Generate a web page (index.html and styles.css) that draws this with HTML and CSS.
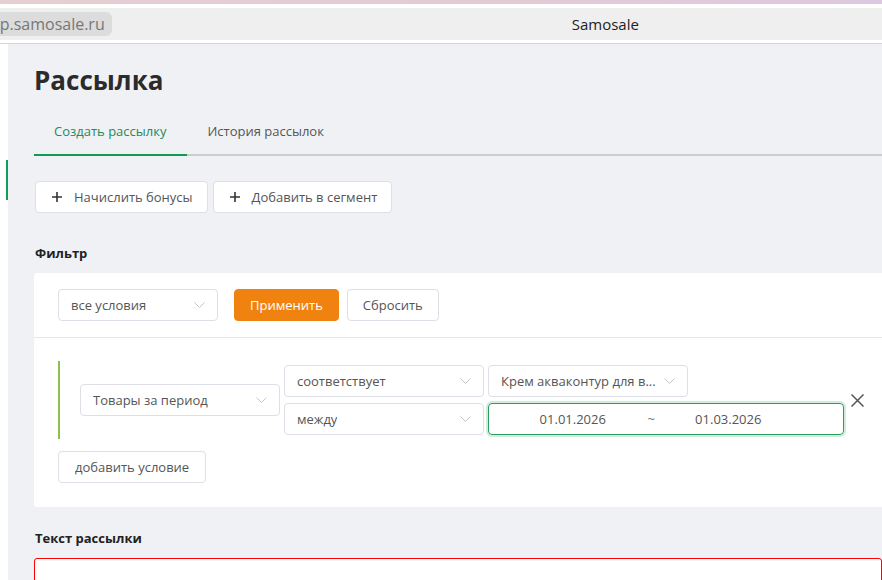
FILE: index.html
```html
<!DOCTYPE html>
<html>
<head>
<title>Samosale</title>
<link rel="stylesheet" href="styles.css">
</head>
<body>
    <div class="browser-top"></div>
    <div class="titlebar">
        <span class="url-pill">app.samosale.ru</span>
        <span class="window-title">Samosale</span>
    </div>
    <div class="app">
        <div class="sidebar"><div class="sidebar-marker"></div></div>
        <div class="main">
            <h1 class="page-title">Рассылка</h1>

            <div class="tabs">
                <div class="tab active">Создать рассылку</div>
                <div class="tab">История рассылок</div>
            </div>

            <div class="actions">
                <button class="btn btn-plus">
                    <svg width="10" height="10" viewBox="0 0 10 10"><path d="M5 0v10M0 5h10" stroke="#333" stroke-width="1.6" fill="none"/></svg>
                    Начислить бонусы
                </button>
                <button class="btn btn-plus">
                    <svg width="10" height="10" viewBox="0 0 10 10"><path d="M5 0v10M0 5h10" stroke="#333" stroke-width="1.6" fill="none"/></svg>
                    Добавить в сегмент
                </button>
            </div>

            <div class="section-label filter-label">Фильтр</div>
            <div class="panel">
                <div class="panel-top">
                    <div class="select w160">
                        <span class="select-text">все условия</span>
                        <svg class="chev" width="11" height="6" viewBox="0 0 11 6"><path d="M0.5 0.5l5 5 5-5" stroke="#c0c4cc" fill="none"/></svg>
                    </div>
                    <button class="btn btn-orange">Применить</button>
                    <button class="btn btn-reset">Сбросить</button>
                </div>
                <div class="panel-body">
                    <div class="condition">
                        <div class="select w200">
                            <span class="select-text">Товары за период</span>
                            <svg class="chev" width="11" height="6" viewBox="0 0 11 6"><path d="M0.5 0.5l5 5 5-5" stroke="#c0c4cc" fill="none"/></svg>
                        </div>
                        <div class="cond-col">
                            <div class="select w200">
                                <span class="select-text">соответствует</span>
                                <svg class="chev" width="11" height="6" viewBox="0 0 11 6"><path d="M0.5 0.5l5 5 5-5" stroke="#c0c4cc" fill="none"/></svg>
                            </div>
                            <div class="select w200">
                                <span class="select-text">между</span>
                                <svg class="chev" width="11" height="6" viewBox="0 0 11 6"><path d="M0.5 0.5l5 5 5-5" stroke="#c0c4cc" fill="none"/></svg>
                            </div>
                        </div>
                        <div class="cond-col">
                            <div class="select w200">
                                <span class="select-text">Крем акваконтур для в...</span>
                                <svg class="chev" width="11" height="6" viewBox="0 0 11 6"><path d="M0.5 0.5l5 5 5-5" stroke="#c0c4cc" fill="none"/></svg>
                            </div>
                            <div class="date-range">
                                <span class="date-input">01.01.2026</span>
                                <span class="date-sep">~</span>
                                <span class="date-input">01.03.2026</span>
                            </div>
                        </div>
                        <svg class="remove" width="13" height="13" viewBox="0 0 13 13"><path d="M0.5 0.5l12 12M12.5 0.5l-12 12" stroke="#555" stroke-width="1.5" fill="none"/></svg>
                    </div>
                    <button class="btn btn-add">добавить условие</button>
                </div>
            </div>

            <div class="section-label text-label">Текст рассылки</div>
            <div class="message-box"></div>
        </div>
    </div>
</body>
</html>
```

FILE: styles.css
```css
body {
    margin: 0;
    font-family: "Open Sans", sans-serif;
    background: #fff;
    overflow: hidden;
    height: 580px;
}
.browser-top {
    height: 4px;
    background: linear-gradient(to right, #e6cfd2, #e3cbd6 60%, #dcc8e0);
    border-bottom: 4px solid #fff;
}
.titlebar {
    height: 32px;
    background: #efefef;
    display: flex;
    align-items: center;
    overflow: hidden;
    border-bottom: 3px solid #fff;
    box-shadow: 0 1px 0 #d6d8d8;
    margin-bottom: 1px;
}
.url-pill {
    background: #dcdcdc;
    color: #777;
    font-size: 16px;
    height: 24px;
    line-height: 24px;
    padding: 0 7px 0 8px;
    border-radius: 6px;
    margin-left: -27px;
    white-space: nowrap;
}
.window-title {
    margin-left: 460px;
    font-size: 15px;
    color: #222;
}
.app {
    display: flex;
    height: 540px;
}
.sidebar {
    width: 8px;
    background: #fff;
    flex-shrink: 0;
}
.sidebar-marker {
    margin-top: 116px;
    margin-left: 6px;
    width: 2px;
    height: 40px;
    background: #0f9d58;
}
.main {
    flex: 1;
    background: #f0f1f5;
    padding-left: 26px;
    overflow: hidden;
}
.page-title {
    margin: 17px 0 0;
    font-size: 26px;
    line-height: 38px;
    font-weight: bold;
    color: #2b2b2b;
}
.tabs {
    display: flex;
    margin-top: 11px;
    border-bottom: 2px solid #cccccc;
}
.tab {
    font-size: 13px;
    line-height: 20px;
    padding: 11px 20px 13px 20px;
    color: #555;
    margin-bottom: -2px;
    border-bottom: 2px solid transparent;
}
.tab.active {
    color: #1f8a5b;
    border-bottom-color: #119a55;
    padding-right: 21px;
}
.actions {
    display: flex;
    gap: 5px;
    margin-top: 25px;
    padding-left: 1px;
}
.btn {
    font-family: "Open Sans", sans-serif;
    font-size: 13px;
    color: #555;
    background: #fff;
    border: 1px solid #dcdfe6;
    border-radius: 4px;
    height: 32px;
    padding: 0 16px;
    cursor: pointer;
    display: flex;
    align-items: center;
    white-space: nowrap;
}
.btn-plus {
    padding-right: 14px;
}
.btn-plus svg {
    margin-right: 12px;
}
.section-label {
    font-size: 13px;
    line-height: 20px;
    font-weight: bold;
    color: #222;
    padding-left: 1px;
}
.filter-label {
    margin-top: 30px;
}
.panel {
    margin-top: 10px;
    background: #fff;
    border-radius: 3px 0 0 3px;
}
.panel-top {
    display: flex;
    align-items: center;
    padding: 16px 24px;
    border-bottom: 1px solid #e6e6e6;
}
.select {
    height: 32px;
    box-sizing: border-box;
    border: 1px solid #dcdfe6;
    border-radius: 4px;
    background: #fff;
    display: flex;
    align-items: center;
    justify-content: space-between;
    padding: 0 12px;
    font-size: 13px;
    color: #555;
    flex-shrink: 0;
}
.select-text {
    white-space: nowrap;
    overflow: hidden;
}
.chev {
    flex-shrink: 0;
    margin-left: 6px;
}
.w160 {
    width: 160px;
}
.w200 {
    width: 200px;
}
.btn-orange {
    background: #f0830f;
    border-color: #f0830f;
    color: #fff;
    margin-left: 16px;
    padding: 0 15px;
}
.btn-reset {
    margin-left: 8px;
    padding: 0 15px;
}
.panel-body {
    padding: 23px 24px 24px;
}
.condition {
    display: flex;
    align-items: center;
    gap: 4px;
    border-left: 2px solid #8cc152;
    padding: 4px 0 4px 20px;
}
.cond-col {
    display: flex;
    flex-direction: column;
    gap: 6px;
}
.date-range {
    width: 356px;
    height: 32px;
    box-sizing: border-box;
    border: 1px solid #2a9d5c;
    border-radius: 4px;
    box-shadow: 0 0 0 2px #d3eddd;
    display: flex;
    align-items: center;
    padding: 0 40px 0 9px;
    font-size: 13px;
    color: #555;
}
.date-input {
    width: 150px;
    text-align: center;
}
.date-sep {
    width: 6px;
    text-align: center;
    color: #777;
}
.remove {
    flex-shrink: 0;
    margin-left: 3px;
}
.btn-add {
    margin-top: 12px;
}
.text-label {
    margin-top: 21px;
}
.message-box {
    margin-top: 10px;
    height: 60px;
    background: #fff;
    border: 1px solid #ff0000;
    border-radius: 3px;
}
```
